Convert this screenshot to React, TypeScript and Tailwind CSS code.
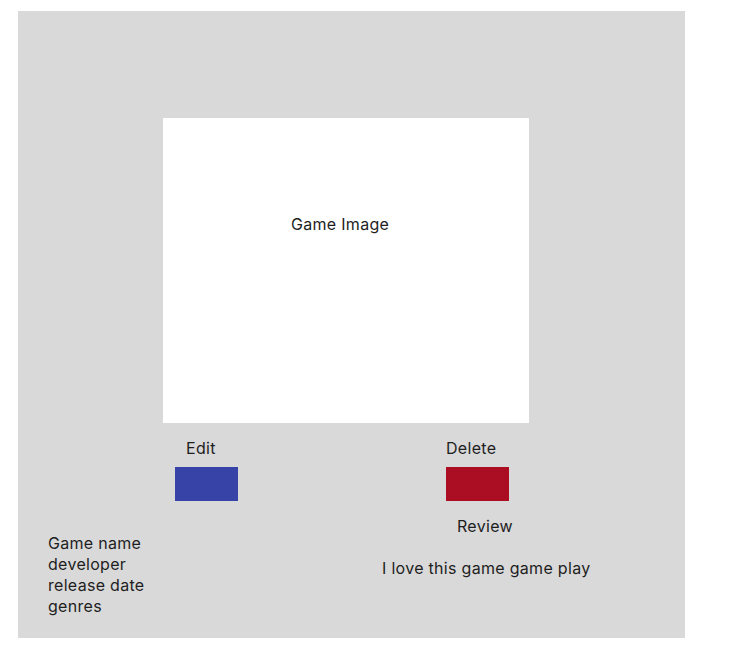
export default function App() {
  return (
    <div
      className="min-h-[662px] w-[730px] bg-white pt-[11px] pl-[18px] text-[16px] leading-[21px] tracking-[0.3px] text-[#1e1e1e]"
      style={{ fontFamily: "Inter, 'Noto Sans', sans-serif" }}
    >
      <div className="flex h-[627px] w-[667px] flex-col bg-[#d9d9d9]">
        {/* image placeholder */}
        <div className="ml-[145px] mt-[107px] h-[305px] w-[366px] bg-white pl-[128px] pt-[96px]">
          Game Image
        </div>

        <div className="mt-[15px] flex">
          {/* left: edit + info */}
          <div className="w-[428px] shrink-0">
            <div className="ml-[157px]">
              <p className="pl-[11px]">Edit</p>
              <button className="mt-[8px] block h-[34px] w-[63px] bg-[#3843a8]" />
            </div>
            <div className="ml-[30px] mt-[32px]">
              <p>Game name</p>
              <p>developer</p>
              <p>release date</p>
              <p>genres</p>
            </div>
          </div>

          {/* right: delete + review */}
          <div>
            <p>Delete</p>
            <button className="mt-[8px] block h-[34px] w-[63px] bg-[#ab0e22]" />
            <p className="mt-[15px] pl-[11px]">Review</p>
            <p className="-ml-[64px] mt-[21px] whitespace-nowrap">I love this game game play</p>
          </div>
        </div>
      </div>
    </div>
  );
}
